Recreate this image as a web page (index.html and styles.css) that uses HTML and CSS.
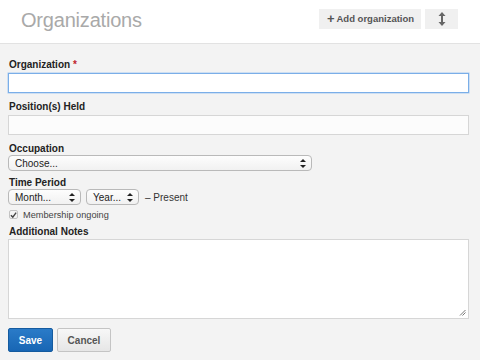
FILE: index.html
```html
<!DOCTYPE html>
<html>
<head>
<meta charset="utf-8">
<link rel="stylesheet" href="styles.css">
</head>
<body>
<header class="top">
  <h1 class="title">Organizations</h1>
  <div class="actions">
    <button class="btn-light add"><span class="plus">+</span>Add organization</button>
    <button class="btn-light sort" aria-label="Reorder">
      <svg width="8" height="14" viewBox="0 0 8 14"><path d="M4 0 L7.5 4 H5 V10 H7.5 L4 14 L0.5 10 H3 V4 H0.5 Z" fill="#666"/></svg>
    </button>
  </div>
</header>
<main class="form">
  <div class="field">
    <label class="lbl">Organization <span class="req">*</span></label>
    <div class="input focus"></div>
  </div>
  <div class="field">
    <label class="lbl">Position(s) Held</label>
    <div class="input"></div>
  </div>
  <div class="field">
    <label class="lbl tight">Occupation</label>
    <div class="select wide"><span>Choose...</span><span class="arr"></span></div>
  </div>
  <div class="field">
    <label class="lbl tight">Time Period</label>
    <div class="period">
      <div class="select month"><span>Month...</span><span class="arr"></span></div>
      <div class="select year"><span>Year...</span><span class="arr"></span></div>
      <span class="present">– Present</span>
    </div>
    <div class="check">
      <span class="box">
        <svg width="8" height="8" viewBox="0 0 8 8"><path d="M1 4.2 L3.2 6.4 L7 1.2" stroke="#444" stroke-width="1.6" fill="none"/></svg>
      </span>
      <span>Membership ongoing</span>
    </div>
  </div>
  <div class="field">
    <label class="lbl notes">Additional Notes</label>
    <div class="textarea">
      <svg class="grip" width="7" height="7" viewBox="0 0 7 7"><path d="M6.5 1 L1 6.5 M6.5 3.5 L3.5 6.5" stroke="#777" stroke-width="1"/></svg>
    </div>
  </div>
  <div class="buttons">
    <button class="save">Save</button>
    <button class="cancel">Cancel</button>
  </div>
</main>
</body>
</html>
```
FILE: styles.css
```css
* { box-sizing: border-box; }
html, body { margin: 0; padding: 0; }
body {
  width: 480px;
  height: 360px;
  overflow: hidden;
  background: #f3f3f3;
  font-family: "Liberation Sans", Arial, sans-serif;
  color: #222;
}
.top {
  height: 44px;
  background: #fff;
  border-bottom: 1px solid #e2e2e2;
  display: flex;
  align-items: center;
  justify-content: space-between;
  padding: 0 22px 0 21px;
}
.title {
  margin: 0;
  font-weight: 300;
  font-size: 20px;
  color: #a9a9a9;
  font-family: "Liberation Sans", Arial, sans-serif;
  letter-spacing: -0.2px;
  position: relative;
  top: -1px;
}
.actions { display: flex; gap: 4px; margin-top: -6px; }
.btn-light {
  height: 20px;
  border: none;
  background: #f0f0f0;
  font-family: inherit;
  font-size: 9.5px;
  font-weight: bold;
  color: #555;
  padding: 0;
  display: flex;
  align-items: center;
  justify-content: center;
}
.add { width: 102px; padding-left: 1px; }
.plus { font-size: 13px; font-weight: bold; margin-right: 2px; line-height: 1; position: relative; top: -0.5px; }
.sort { width: 33px; }
.form { padding: 15px 11px 0 8px; }
.field { display: flex; flex-direction: column; }
.lbl {
  font-size: 10px;
  font-weight: bold;
  color: #222;
  line-height: 12px;
  padding-left: 1px;
  margin-bottom: 2px;
}
.lbl.tight { margin-bottom: 0; }
.lbl.notes { margin-bottom: 1px; }
.req { color: #c0242a; }
.input {
  height: 20px;
  background: #fcfcfc;
  border: 1px solid #d6d6d6;
  margin-bottom: 8px;
}
.input.focus {
  background: #fff;
  border: 1px solid #7aaee8;
  box-shadow: 0 0 0 0.5px #a9cbf1;
}
.select {
  height: 16px;
  border: 1px solid #b9b9b9;
  border-radius: 4px;
  background: linear-gradient(#fdfdfd, #f1f1f1);
  font-size: 10px;
  color: #222;
  display: flex;
  align-items: center;
  justify-content: space-between;
  padding: 0 5px 0 6px;
}
.select.wide { width: 304px; margin-bottom: 6px; }
.arr {
  width: 6px;
  height: 9px;
  position: relative;
}
.arr::before, .arr::after {
  content: "";
  position: absolute;
  left: 0;
  border-left: 3px solid transparent;
  border-right: 3px solid transparent;
}
.arr::before { top: 0; border-bottom: 3.5px solid #222; }
.arr::after { bottom: 0; border-top: 3.5px solid #222; }
.period { display: flex; align-items: center; gap: 5px; }
.month { width: 73px; }
.year { width: 53px; }
.present { font-size: 10px; color: #333; margin-left: 1px; }
.check {
  display: flex;
  align-items: center;
  gap: 5px;
  font-size: 9.2px;
  color: #444;
  margin: 4px 0 6px 1px;
  height: 11px;
}
.box {
  width: 9px;
  height: 9px;
  border: 1px solid #c3c3c3;
  border-radius: 2px;
  background: #f4f4f4;
  display: flex;
  align-items: center;
  justify-content: center;
}
.textarea {
  height: 80px;
  background: #fff;
  border: 1px solid #d6d6d6;
  position: relative;
  margin-bottom: 9px;
}
.grip { position: absolute; right: 2px; bottom: 2px; }
.buttons { display: flex; gap: 4px; }
.buttons button {
  height: 24px;
  border-radius: 2px;
  font-family: inherit;
  font-size: 10px;
  font-weight: bold;
  padding: 0;
}
.save {
  width: 45px;
  background: linear-gradient(#2a7bc8, #1866b4);
  border: 1px solid #155b9f;
  color: #fff;
}
.cancel {
  width: 54px;
  background: linear-gradient(#f7f7f7, #e6e6e6);
  border: 1px solid #c4c4c4;
  color: #555;
}
```
